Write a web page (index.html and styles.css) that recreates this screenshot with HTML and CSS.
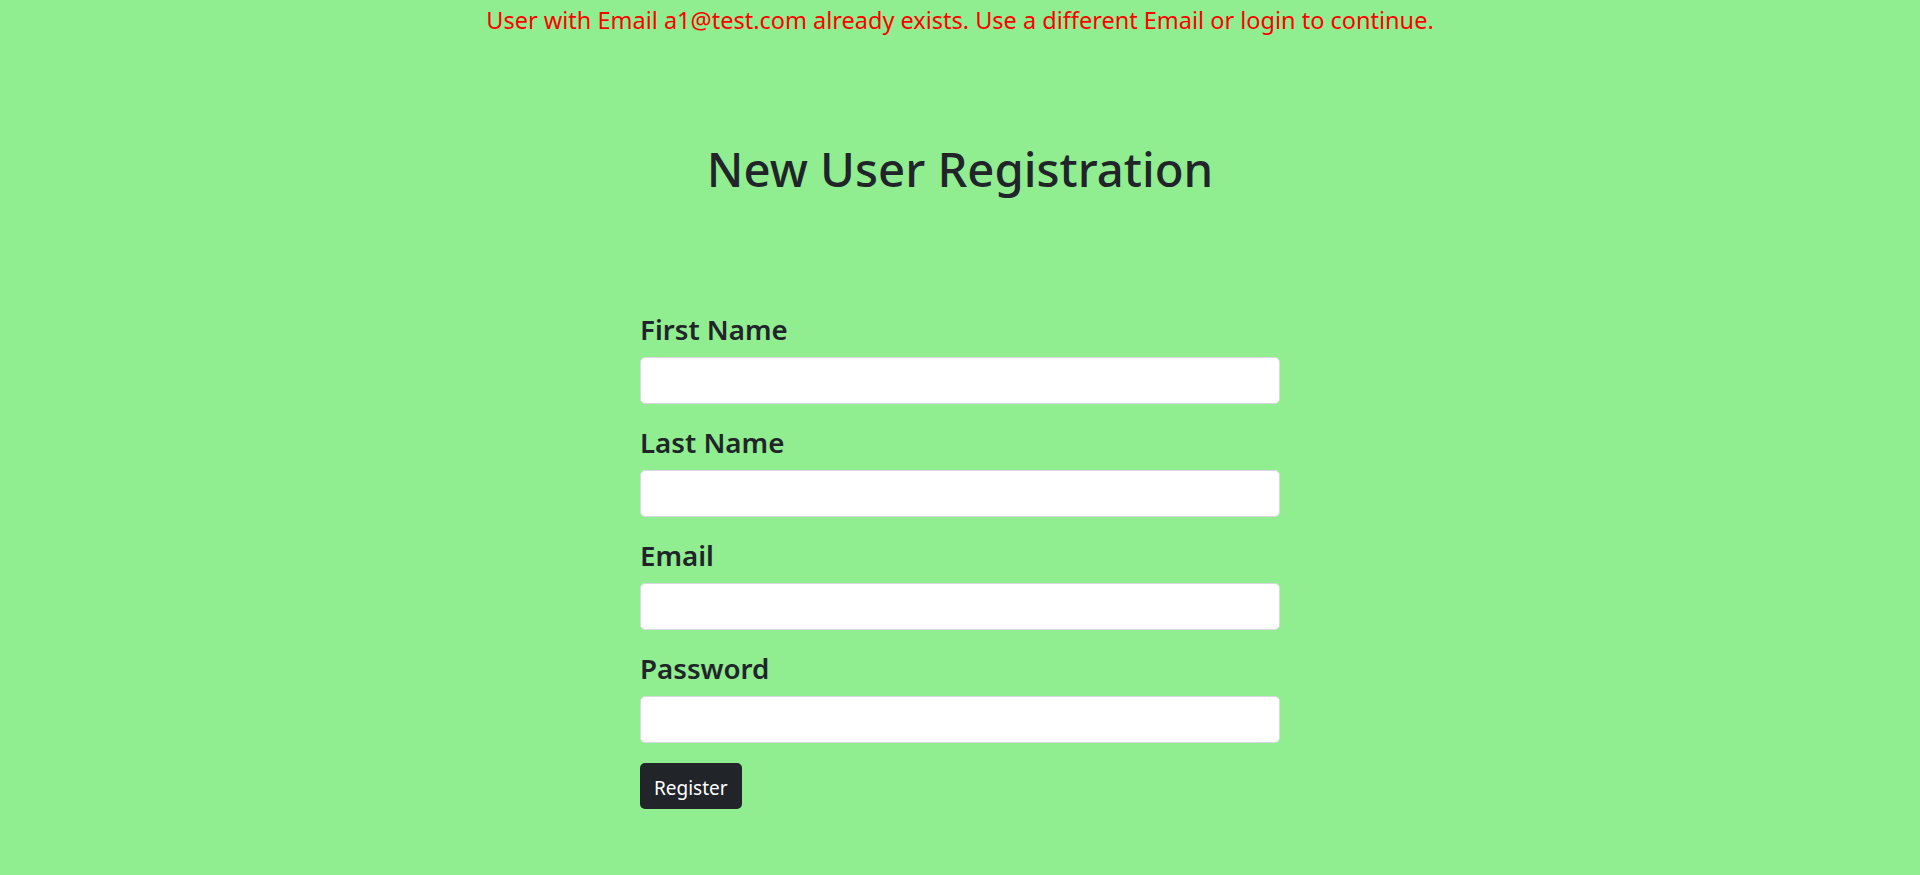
FILE: index.html
```html
<!DOCTYPE html>
<html lang="en">
<head>
<meta charset="utf-8">
<title>New User Registration</title>
<link rel="stylesheet" href="styles.css">
</head>
<body>
<p class="error">User with Email a1@test.com already exists. Use a different Email or login to continue.</p>
<h1 class="title">New User Registration</h1>
<form class="reg-form">
  <div class="field">
    <label class="field-label" for="fn">First Name</label>
    <input class="field-input" id="fn" type="text">
  </div>
  <div class="field">
    <label class="field-label" for="ln">Last Name</label>
    <input class="field-input" id="ln" type="text">
  </div>
  <div class="field">
    <label class="field-label" for="em">Email</label>
    <input class="field-input" id="em" type="email">
  </div>
  <div class="field">
    <label class="field-label" for="pw">Password</label>
    <input class="field-input" id="pw" type="password">
  </div>
  <button class="btn-register" type="button">Register</button>
</form>
</body>
</html>
```
FILE: styles.css
```css
html, body {
  margin: 0;
  padding: 0;
}
body {
  background: #90ee90;
  color: #212529;
  font-family: "Noto Sans", "Open Sans", sans-serif;
  min-height: 875px;
}
.error {
  margin: 0;
  padding-top: 2px;
  text-align: center;
  color: #ff0000;
  font-size: 23.5px;
  line-height: 36px;
}
.title {
  margin: 101px 0 0;
  text-align: center;
  font-size: 47.3px;
  font-weight: 500;
  line-height: 60px;
}
.reg-form {
  width: 640px;
  margin: 112px auto 0;
  display: flex;
  flex-direction: column;
  align-items: flex-start;
}
.field {
  width: 100%;
  display: flex;
  flex-direction: column;
  margin-bottom: 20px;
}
.field-label {
  font-size: 27.7px;
  font-weight: 600;
  line-height: 36px;
  margin-bottom: 10px;
}
.field-input {
  box-sizing: border-box;
  width: 100%;
  height: 47px;
  border: 1px solid #d6d9de;
  border-radius: 5px;
  background: #fff;
  font: inherit;
  font-size: 20px;
  padding: 6px 15px;
}
.btn-register {
  height: 46px;
  padding: 4px 14px 0;
  border: none;
  border-radius: 5px;
  background: #212529;
  color: #fff;
  font-family: inherit;
  font-size: 19px;
  cursor: pointer;
}
```
